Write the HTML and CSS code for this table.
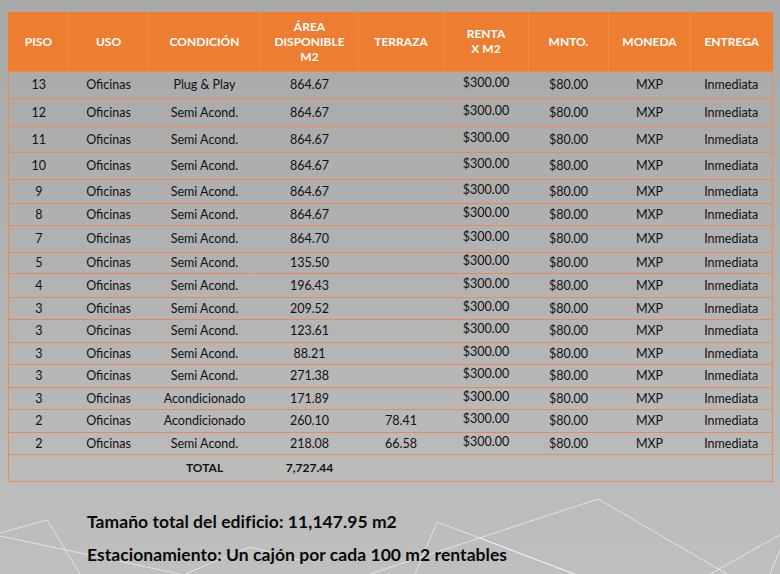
FILE: index.html
```html
<!DOCTYPE html>
<html lang="es">
<head>
<meta charset="utf-8">
<link rel="stylesheet" href="styles.css">
</head>
<body>
<div class="page">
  <svg class="deco" width="780" height="120" viewBox="0 454 780 120" aria-hidden="true">
    <polyline points="0,533 47,520 80,574" />
    <polyline points="0,536 180,574" />
    <polyline points="185,574 250,547 300,560" />
    <polyline points="415,574 437,522 575,574" />
    <polyline points="370,574 598,499 727,574" />
    <polyline points="480,538 573,574" />
    <polyline points="710,574 780,535" />
    <polyline points="770,574 780,550" />
  </svg>
  <table class="grid">
    <colgroup>
      <col class="c60"><col class="c80"><col class="c112"><col class="c98"><col class="c85"><col class="c85"><col class="c80"><col class="c82"><col class="c82">
    </colgroup>
    <thead>
      <tr class="head">
        <th>PISO</th><th>USO</th><th>CONDICIÓN</th><th>ÁREA<br>DISPONIBLE<br>M2</th><th>TERRAZA</th><th>RENTA<br>X M2</th><th>MNTO.</th><th>MONEDA</th><th>ENTREGA</th>
      </tr>
    </thead>
    <tbody>
      <tr class="h27"><td>13</td><td>Oficinas</td><td>Plug &amp; Play</td><td>864.67</td><td></td><td class="up">$300.00</td><td>$80.00</td><td>MXP</td><td>Inmediata</td></tr>
      <tr class="h28"><td>12</td><td>Oficinas</td><td>Semi Acond.</td><td>864.67</td><td></td><td class="up">$300.00</td><td>$80.00</td><td>MXP</td><td>Inmediata</td></tr>
      <tr class="h26"><td>11</td><td>Oficinas</td><td>Semi Acond.</td><td>864.67</td><td></td><td class="up">$300.00</td><td>$80.00</td><td>MXP</td><td>Inmediata</td></tr>
      <tr class="h27"><td>10</td><td>Oficinas</td><td>Semi Acond.</td><td>864.67</td><td></td><td class="up">$300.00</td><td>$80.00</td><td>MXP</td><td>Inmediata</td></tr>
      <tr class="h24"><td>9</td><td>Oficinas</td><td>Semi Acond.</td><td>864.67</td><td></td><td class="up">$300.00</td><td>$80.00</td><td>MXP</td><td>Inmediata</td></tr>
      <tr class="h22"><td>8</td><td>Oficinas</td><td>Semi Acond.</td><td>864.67</td><td></td><td class="up">$300.00</td><td>$80.00</td><td>MXP</td><td>Inmediata</td></tr>
      <tr class="h27"><td>7</td><td>Oficinas</td><td>Semi Acond.</td><td>864.70</td><td></td><td class="up">$300.00</td><td>$80.00</td><td>MXP</td><td>Inmediata</td></tr>
      <tr class="h21"><td>5</td><td>Oficinas</td><td>Semi Acond.</td><td>135.50</td><td></td><td class="up">$300.00</td><td>$80.00</td><td>MXP</td><td>Inmediata</td></tr>
      <tr class="h24"><td>4</td><td>Oficinas</td><td>Semi Acond.</td><td>196.43</td><td></td><td class="up">$300.00</td><td>$80.00</td><td>MXP</td><td>Inmediata</td></tr>
      <tr class="h22"><td>3</td><td>Oficinas</td><td>Semi Acond.</td><td>209.52</td><td></td><td class="up">$300.00</td><td>$80.00</td><td>MXP</td><td>Inmediata</td></tr>
      <tr class="h23"><td>3</td><td>Oficinas</td><td>Semi Acond.</td><td>123.61</td><td></td><td class="up">$300.00</td><td>$80.00</td><td>MXP</td><td>Inmediata</td></tr>
      <tr class="h22"><td>3</td><td>Oficinas</td><td>Semi Acond.</td><td>88.21</td><td></td><td class="up">$300.00</td><td>$80.00</td><td>MXP</td><td>Inmediata</td></tr>
      <tr class="h23"><td>3</td><td>Oficinas</td><td>Semi Acond.</td><td>271.38</td><td></td><td class="up">$300.00</td><td>$80.00</td><td>MXP</td><td>Inmediata</td></tr>
      <tr class="h22"><td>3</td><td>Oficinas</td><td>Acondicionado</td><td>171.89</td><td></td><td class="up">$300.00</td><td>$80.00</td><td>MXP</td><td>Inmediata</td></tr>
      <tr class="h23"><td>2</td><td>Oficinas</td><td>Acondicionado</td><td>260.10</td><td>78.41</td><td class="up">$300.00</td><td>$80.00</td><td>MXP</td><td>Inmediata</td></tr>
      <tr class="h22"><td>2</td><td>Oficinas</td><td>Semi Acond.</td><td>218.08</td><td>66.58</td><td class="up">$300.00</td><td>$80.00</td><td>MXP</td><td>Inmediata</td></tr>
      <tr class="h27 total"><td></td><td></td><td>TOTAL</td><td>7,727.44</td><td></td><td></td><td></td><td></td><td></td></tr>
    </tbody>
  </table>
  <div class="notes">
    <p>Tamaño total del edificio: 11,147.95 m2</p>
    <p>Estacionamiento: Un cajón por cada 100 m2 rentables</p>
  </div>
</div>
</body>
</html>
```
FILE: styles.css
```css
html, body {
  margin: 0;
  padding: 0;
}
body {
  width: 780px;
  height: 574px;
  overflow: hidden;
  background: linear-gradient(180deg, #a8a8a8 0%, #b4b4b4 55%, #bfbfbf 100%);
  font-family: Lato, "Open Sans", sans-serif;
  color: #111;
}
.page {
  position: relative;
  width: 780px;
  height: 574px;
  padding: 12px 8px 0 8px;
  box-sizing: border-box;
}
.deco {
  position: absolute;
  left: 0;
  top: 454px;
  pointer-events: none;
}
.deco polyline {
  fill: none;
  stroke: rgba(255, 255, 255, 0.55);
  stroke-width: 1;
}
.grid {
  position: relative;
  width: 764px;
  border-collapse: collapse;
  table-layout: fixed;
  font-size: 12.5px;
}
.c60 { width: 60px; }
.c80 { width: 80px; }
.c82 { width: 82px; }
.c85 { width: 85px; }
.c98 { width: 98px; }
.c112 { width: 112px; }
.head {
  height: 59px;
  background: #ed7d31;
}
.head th {
  color: #fff;
  font-weight: 700;
  font-size: 12px;
  line-height: 15px;
  text-align: center;
  vertical-align: middle;
  padding: 0;
  border-left: 1px solid #f08c48;
  border-bottom: 1px solid #ef8a48;
}
.head th:first-child {
  border-left: 1px solid #ed7d31;
}
.grid td {
  text-align: center;
  vertical-align: middle;
  padding: 0;
  border-bottom: 1px solid #ee8b4c;
  white-space: nowrap;
}
.grid td:first-child {
  border-left: 1px solid #ee8b4c;
}
.grid td:last-child {
  border-right: 1px solid #ee8b4c;
}
.grid td.up {
  padding-bottom: 4px;
}
.h21 { height: 21px; }
.h22 { height: 22px; }
.h23 { height: 23px; }
.h24 { height: 24px; }
.h26 { height: 26px; }
.h27 { height: 27px; }
.h28 { height: 28px; }
.total td {
  font-weight: 700;
  font-size: 12px;
}
.notes {
  position: relative;
  margin-left: 79px;
  margin-top: 29px;
}
.notes p {
  margin: 0 0 12px 0;
  font-weight: 700;
  font-size: 17.5px;
  line-height: 21px;
  color: #0a0a0a;
  letter-spacing: 0.05px;
}
```
